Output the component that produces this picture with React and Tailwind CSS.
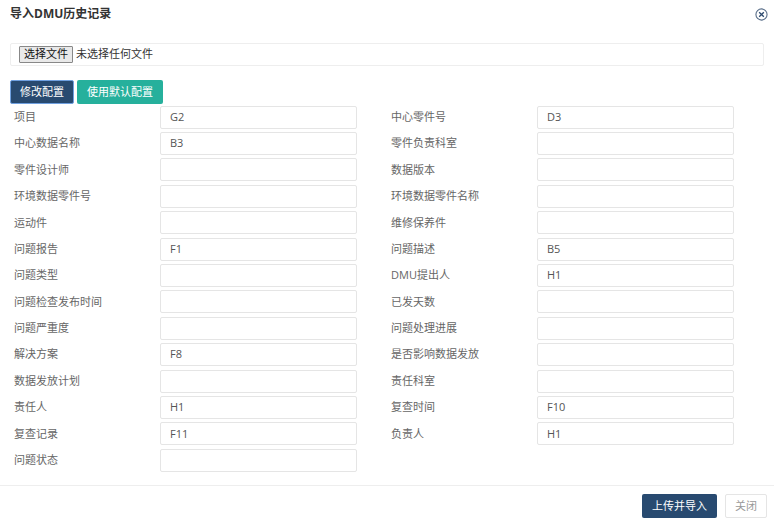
const rows=[["项目","G2","中心零件号","D3"],["中心数据名称","B3","零件负责科室",""],["零件设计师","","数据版本",""],["环境数据零件号","","环境数据零件名称",""],["运动件","","维修保养件",""],["问题报告","F1","问题描述","B5"],["问题类型","","DMU提出人","H1"],["问题检查发布时间","","已发天数",""],["问题严重度","","问题处理进展",""],["解决方案","F8","是否影响数据发放",""],["数据发放计划","","责任科室",""],["责任人","H1","复查时间","F10"],["复查记录","F11","负责人","H1"],["问题状态","",null,null]];
function Cell({l,v}){if(l===null)return <div className="flex-1"/>;return <div className="flex items-center flex-1 h-full"><div className="w-[150px] pl-[4px] text-[#666]">{l}</div><div className="w-[197px] h-[23px] border border-[#e5e5e5] rounded-[2px] px-[9px] flex items-center text-[#555]">{v}</div></div>}
export default function App(){return <div className="w-[774px] h-[525px] bg-white relative text-[11px]" style={{fontFamily:'"Open Sans","Noto Sans CJK SC",sans-serif'}}>
<div className="flex items-center justify-between h-[26px] pl-[10px] pr-[6px] pt-[2px]"><span className="font-bold text-[12px] text-[#333]">导入DMU历史记录</span>
<svg width="13" height="13" viewBox="0 0 14 14"><circle cx="7" cy="7" r="6" fill="none" stroke="#5a6f8a" strokeWidth="1.2"/><path d="M4.5 4.5l5 5M9.5 4.5l-5 5" stroke="#2d4a6e" strokeWidth="1.4"/></svg></div>
<div className="mx-[10px] mt-[17px] h-[23px] border border-[#eee] rounded-[2px] flex items-center px-[8px]"><span className="border border-[#888] bg-[#e9e9e9] px-[4px] h-[17px] flex items-center text-[#111] rounded-[1px]">选择文件</span><span className="ml-[3px] text-[#333]">未选择任何文件</span></div>
<div className="flex gap-[3px] ml-[10px] mt-[14px]"><span className="bg-[#284a70] text-white h-[24px] px-[9px] flex items-center border border-[#6fa0e0] rounded-[2px]">修改配置</span><span className="bg-[#26b09c] text-white h-[24px] px-[10px] flex items-center rounded-[2px]">使用默认配置</span></div>
<div className="ml-[10px] w-[730px]">{rows.map((r,i)=><div key={i} className="flex h-[26.4px] items-center"><Cell l={r[0]} v={r[1]}/><div className="w-[24px]"/><Cell l={r[2]} v={r[3]}/></div>)}</div>
<div className="absolute left-0 right-0 top-[485px] border-t border-[#eee] flex justify-end gap-[8px] pt-[8px] pr-[7px]"><span className="bg-[#284a70] text-white h-[24px] px-[10px] flex items-center rounded-[2px]">上传并导入</span><span className="border border-[#e5e5e5] text-[#999] h-[24px] px-[9px] flex items-center rounded-[2px]">关闭</span></div>
</div>}
